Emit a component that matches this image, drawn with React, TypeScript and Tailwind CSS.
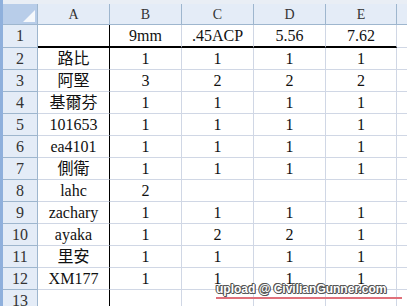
// Excel 2007 style sheet: ammo tally per member (rows 1-13, columns A-E).
const rows: string[][] = [
  ["", "9mm", ".45ACP", "5.56", "7.62"],
  ["路比", "1", "1", "1", "1"],
  ["阿堅", "3", "2", "2", "2"],
  ["基爾芬", "1", "1", "1", "1"],
  ["101653", "1", "1", "1", "1"],
  ["ea4101", "1", "1", "1", "1"],
  ["側衛", "1", "1", "1", "1"],
  ["lahc", "2", "", "", ""],
  ["zachary", "1", "1", "1", "1"],
  ["ayaka", "1", "2", "2", "1"],
  ["里安", "1", "1", "1", "1"],
  ["XM177", "1", "1", "1", "1"],
  ["", "", "", "", ""],
];

const cols = ["A", "B", "C", "D", "E"];
const widths = ["w-[72px]", "w-[72px]", "w-[72px]", "w-[72px]", "w-[71px]"];

export default function App() {
  return (
    <div
      className="relative h-[306px] w-[407px] overflow-hidden bg-white text-[#111]"
      style={{ fontFamily: '"Liberation Serif", "Noto Sans CJK TC", serif' }}
    >
      {/* top strip */}
      <div className="flex h-[4px]">
        <div className="w-[3px] bg-[#8fb0dc]" />
        <div className="flex-1 bg-[#e9eef5]" />
      </div>

      <div className="flex">
        {/* left edge */}
        <div className="w-[3px] shrink-0 bg-[#8fb0dc]" />

        <div className="flex-1">
          {/* column header row */}
          <div className="flex h-[21px]">
            <div className="relative w-[35px] shrink-0 border-r border-b border-[#9eb6ce] bg-[#b8cde9]">
              <svg className="absolute right-[2px] bottom-[2px]" width="12" height="12">
                <polygon points="12,0 12,12 0,12" fill="#ffffff" opacity="0.85" />
              </svg>
            </div>
            {cols.map((c, i) => (
              <div
                key={c}
                className={`${widths[i]} flex shrink-0 items-center justify-center border-r border-b border-[#9eb6ce] bg-[#e4ecf7] text-[14px] text-[#333]`}
              >
                {c}
              </div>
            ))}
            <div className="flex-1 border-b border-[#9eb6ce] bg-[#e4ecf7]" />
          </div>

          {rows.map((r, ri) => {
            const first = ri === 0;
            return (
              <div key={ri} className={`flex ${first ? "h-[23px]" : "h-[22px]"}`}>
                <div className="flex w-[35px] shrink-0 items-center justify-center border-r border-b border-[#9eb6ce] bg-[#e4ecf7] text-[16px] text-[#333]">
                  {ri + 1}
                </div>
                {r.map((v, ci) => (
                  <div
                    key={ci}
                    className={`${widths[ci]} flex shrink-0 items-center justify-center text-[16px] ${
                      first ? "border-b-2 border-b-black" : "border-b border-b-[#d0d7e5]"
                    } ${ci === 0 ? "border-r border-r-black" : "border-r border-r-[#d0d7e5]"}`}
                  >
                    {v}
                  </div>
                ))}
                <div className="flex-1 border-b border-[#d0d7e5]" />
              </div>
            );
          })}
        </div>
      </div>

      {/* watermark */}
      <div className="absolute left-[216px] top-[280px] text-[12px] font-bold tracking-[0px] text-white [font-family:'Liberation_Sans',sans-serif] [text-shadow:1px_0_#555,-1px_0_#555,0_1px_#555,0_-1px_#555,1px_1px_#555,-1px_-1px_#555]">
        upload @ CivilianGunner.com
      </div>
      <div className="absolute left-[216px] top-[297px] h-[2px] w-[186px] bg-[#e0707a]" />
    </div>
  );
}
